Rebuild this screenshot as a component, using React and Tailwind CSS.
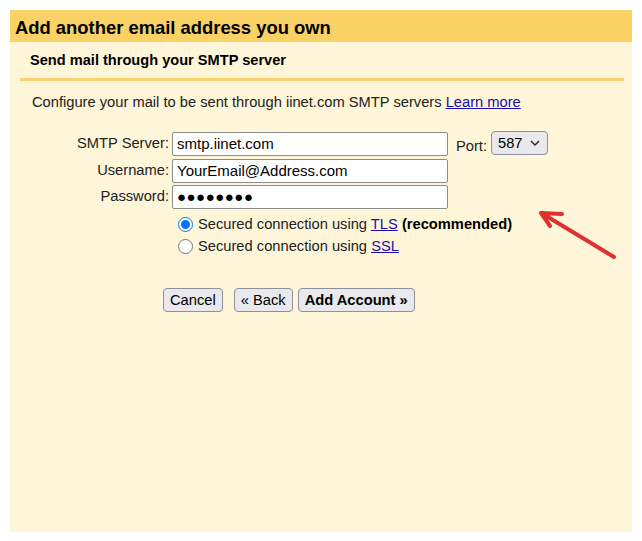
import React from 'react';

const Label = ({ children }) => (
  <div className="w-[162px] pr-[3px] text-right">{children}</div>
);

const TextBox = ({ value, className = '' }) => (
  <div
    className={`flex h-[24px] w-[276px] items-center rounded-[2px] border border-[#8c8c8c] bg-white pl-[4px] text-[15px] text-black ${className}`}
  >
    {value}
  </div>
);

const Btn = ({ children, bold }) => (
  <button
    className={`h-[24px] rounded-[4px] border border-[#8f8f9d] bg-[#e9e9ed] px-[6px] text-[14.7px] text-black ${bold ? 'font-bold' : ''}`}
  >
    {children}
  </button>
);

const Radio = ({ checked }) => (
  <span
    className={`flex h-[15px] w-[15px] shrink-0 items-center justify-center rounded-full border ${
      checked ? 'border-[#0075ff] bg-white' : 'border-[#767676] bg-white'
    }`}
  >
    {checked && <span className="h-[9px] w-[9px] rounded-full bg-[#0075ff]" />}
  </span>
);

export default function App() {
  return (
    <div className="h-[541px] w-[642px] bg-white px-[10px] pt-[10px] font-['Liberation_Sans',Arial,sans-serif] text-[#222]">
      <div className="relative flex h-[522px] w-[622px] flex-col bg-[#fff5d8]">
        <div className="flex h-[32px] items-center bg-[#fad164] pl-[5px] pt-[3px] text-[18.4px] font-bold text-black">
          Add another email address you own
        </div>

        <div className="pl-[20px] pt-[10px] text-[14.6px] font-bold leading-[16px] text-black">
          Send mail through your SMTP server
        </div>
        <div className="ml-[10px] mr-[8px] mt-[10px] h-[3px] bg-[#f9d36e]" />

        <div className="mt-[13px] pl-[22px] text-[14.7px] leading-[16px] text-[#222]">
          Configure your mail to be sent through iinet.com SMTP servers{' '}
          <a href="#" className="text-[#1a0dab] underline">
            Learn more
          </a>
        </div>

        <div className="mt-[22px] flex flex-col gap-[2px] text-[14.7px]">
          <div className="flex items-start">
            <Label>SMTP Server:</Label>
            <TextBox value="smtp.iinet.com" />
            <span className="ml-[8px] pt-[3px]">Port:</span>
            <div className="ml-[4px] -mt-[1px] flex h-[24px] w-[57px] items-center justify-between rounded-[4px] border border-[#8f8f9d] bg-[#e9e9ed] pl-[6px] pr-[7px] text-black">
              <span>587</span>
              <svg width="10" height="6" viewBox="0 0 10 6" fill="none">
                <path d="M1 1l4 4 4-4" stroke="#222" strokeWidth="1.4" />
              </svg>
            </div>
          </div>
          <div className="flex items-start">
            <Label>Username:</Label>
            <TextBox value="YourEmail@Address.com" />
          </div>
          <div className="flex items-start">
            <Label>Password:</Label>
            <TextBox value="●●●●●●●●" className="tracking-[0.5px] text-[13px]" />
          </div>
        </div>

        <div className="ml-[168px] mt-[6px] flex flex-col gap-[4px] text-[14.7px] leading-[18px]">
          <label className="flex items-center gap-[5px]">
            <Radio checked />
            <span>
              Secured connection using{' '}
              <a href="#" className="text-[#1a0dab] underline">TLS</a>{' '}
              <b className="text-black">(recommended)</b>
            </span>
          </label>
          <label className="flex items-center gap-[5px]">
            <Radio />
            <span>
              Secured connection using{' '}
              <a href="#" className="text-[#1a0dab] underline">SSL</a>
            </span>
          </label>
        </div>

        <div className="ml-[153px] mt-[33px] flex items-center">
          <Btn>Cancel</Btn>
          <span className="ml-[11px]" />
          <Btn>« Back</Btn>
          <span className="ml-[5px]" />
          <Btn bold>Add Account »</Btn>
        </div>

        <svg
          className="absolute left-[515px] top-[188px]"
          width="96"
          height="70"
          viewBox="0 0 96 70"
          fill="none"
        >
          <path
            d="M89 59L18 16M16 15l9 13M16 15l21 1"
            stroke="#e03131"
            strokeWidth="4"
            strokeLinecap="round"
          />
        </svg>
      </div>
    </div>
  );
}
